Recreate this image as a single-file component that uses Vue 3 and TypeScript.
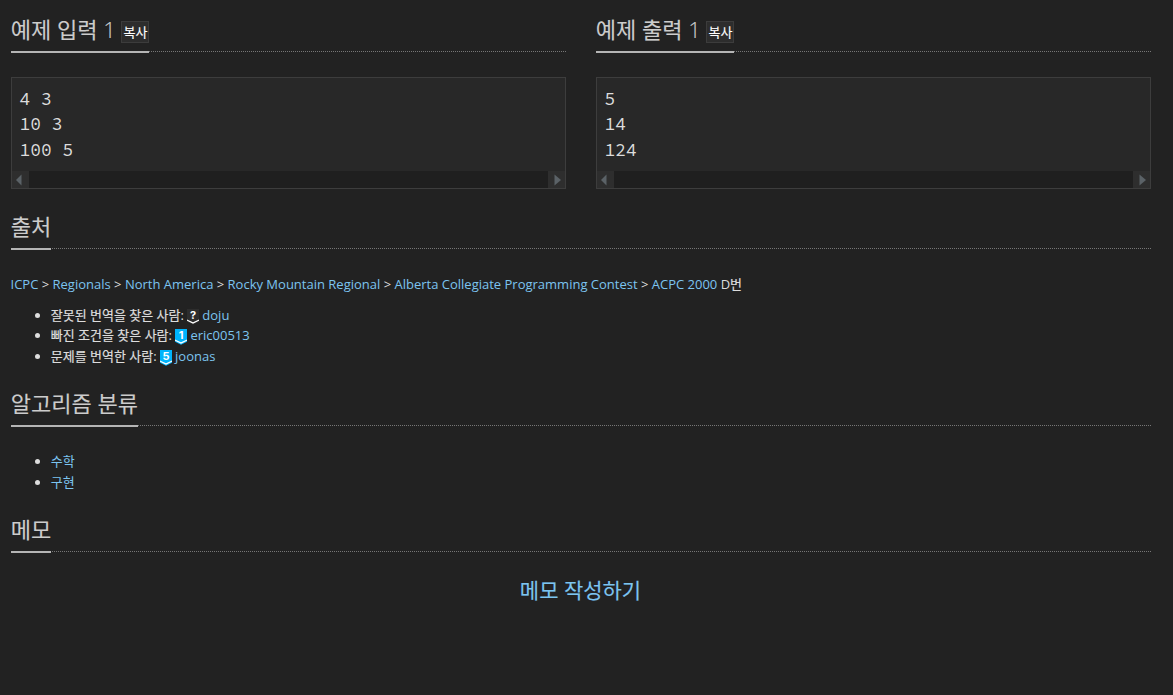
<script setup lang="ts">
interface Sample { title: string; no: number; lines: string[] }
interface Credit { role: string; tier: string; user: string }

const samples: Sample[] = [
  { title: '예제 입력', no: 1, lines: ['4 3', '10 3', '100 5'] },
  { title: '예제 출력', no: 1, lines: ['5', '14', '124'] },
]
const trail: string[] = [
  'ICPC', 'Regionals', 'North America', 'Rocky Mountain Regional',
  'Alberta Collegiate Programming Contest', 'ACPC 2000',
]
const credits: Credit[] = [
  { role: '잘못된 번역을 찾은 사람', tier: '?', user: 'doju' },
  { role: '빠진 조건을 찾은 사람', tier: '1', user: 'eric00513' },
  { role: '문제를 번역한 사람', tier: '5', user: 'joonas' },
]
const tags: string[] = ['수학', '구현']
</script>

<template>
  <main class="page">
    <div class="samples">
      <section v-for="s in samples" :key="s.title">
        <div class="headline">
          <h2>{{ s.title }} <span class="no">{{ s.no }}</span> <button type="button" class="copy">복사</button></h2>
        </div>
        <div class="sample">
          <pre>{{ s.lines.join('\n') }}</pre>
          <div class="scrollbar">
            <span class="arrow"><svg width="17" height="17" viewBox="0 0 17 17"><path d="M9.5 3.5v11L4 9z" fill="#5b6267" /></svg></span>
            <span class="arrow"><svg width="17" height="17" viewBox="0 0 17 17"><path d="M6.5 3.5v11L13 9z" fill="#5b6267" /></svg></span>
          </div>
        </div>
      </section>
    </div>

    <section class="source">
      <div class="headline"><h2>출처</h2></div>
      <p class="trail">
        <template v-for="(t, i) in trail" :key="t"><template v-if="i"> &gt; </template><a>{{ t }}</a></template> D<span class="ko">번</span>
      </p>
      <ul>
        <li v-for="c in credits" :key="c.user">
          <span class="ko">{{ c.role }}</span>: <svg class="tier" width="12" height="16" viewBox="0 0 12 16">
            <path d="M0 0h12v12.7L6 15.8 0 12.7z" :fill="c.tier === '?' ? '#2d2d2d' : '#00b4fc'" />
            <path d="M0 10.4l6 2.9 6-2.9v1.4l-6 2.9-6-2.9z" fill="#fff" />
            <text x="6" y="9.8" text-anchor="middle">{{ c.tier }}</text>
          </svg><a class="user">{{ c.user }}</a>
        </li>
      </ul>
    </section>

    <section class="tags">
      <div class="headline"><h2>알고리즘 분류</h2></div>
      <ul>
        <li v-for="t in tags" :key="t"><a>{{ t }}</a></li>
      </ul>
    </section>

    <section class="memo">
      <div class="headline"><h2>메모</h2></div>
      <div class="write"><a>메모 작성하기</a></div>
    </section>
  </main>
</template>

<style>
body { background: #222; }
</style>

<style scoped>
.page {
  box-sizing: border-box;
  height: 695px;
  overflow: hidden;
  padding: 10px 22px 0 11px;
  background: #222;
  color: #ddd;
  font: 13px/20.8px "Open Sans", "Noto Sans CJK KR", sans-serif;
}
.samples { display: grid; grid-template-columns: 1fr 1fr; gap: 30px; }
.headline {
  display: flex;
  box-sizing: border-box;
  height: 42px;
  border-bottom: 1px dotted #777;
}
h2 {
  box-sizing: border-box;
  height: 43px;
  margin: 0;
  border-bottom: 2px solid #b5b5b5;
  color: #ccc;
  font-size: 22px;
  font-weight: 400;
  font-family: "Open Sans", "Noto Sans CJK KR", sans-serif;
  line-height: 38px;
  white-space: nowrap;
  text-indent: -0.2px;
  -webkit-text-stroke: 0.12px;
}
.no { font-weight: 300; }
.copy {
  box-sizing: border-box;
  width: 28px;
  height: 22px;
  margin-left: 0;
  padding: 0;
  border: 1px solid #3c3c3c;
  background: #2d2d2d;
  color: #fff;
  font: 400 13px/20px "Open Sans", "Noto Sans CJK KR", sans-serif;
  text-indent: 0;
  vertical-align: 1px;
}
.sample {
  box-sizing: border-box;
  height: 112px;
  margin-top: 25px;
  border: 1px solid #3d3d3d;
  background: #282828;
}
pre {
  box-sizing: border-box;
  height: 93px;
  margin: 0;
  padding: 7.9px 8px 8px 7.4px;
  color: #ddd;
  font: 18px/25.4px "Source Code Pro", "Liberation Mono", monospace;
}
.scrollbar { display: flex; justify-content: space-between; height: 17px; background: #1f1f1f; }
.arrow { width: 17px; height: 17px; background: #2e2e2e; }
.arrow svg { display: block; }
a { color: #7cc4f0; }
.ko { -webkit-text-stroke: 0.2px; }
ul { margin: 0; padding-left: 40px; text-indent: -0.2px; }
li { height: 20.8px; }
.source { margin-top: 18px; }
.trail { margin: 25px 0 9.8px; text-indent: -0.5px; }
.tier { vertical-align: -5px; }
.tier text { fill: #fff; font: 700 11px Inter, sans-serif; text-indent: 0; }
.user { margin-left: 3px; }
.tags { margin-top: 17px; }
.tags ul { padding-top: 25px; }
.memo { margin-top: 17px; }
.write { margin-top: 21px; text-align: center; font-size: 21px; line-height: 34px; text-indent: -1px; -webkit-text-stroke: 0.12px; }
</style>
